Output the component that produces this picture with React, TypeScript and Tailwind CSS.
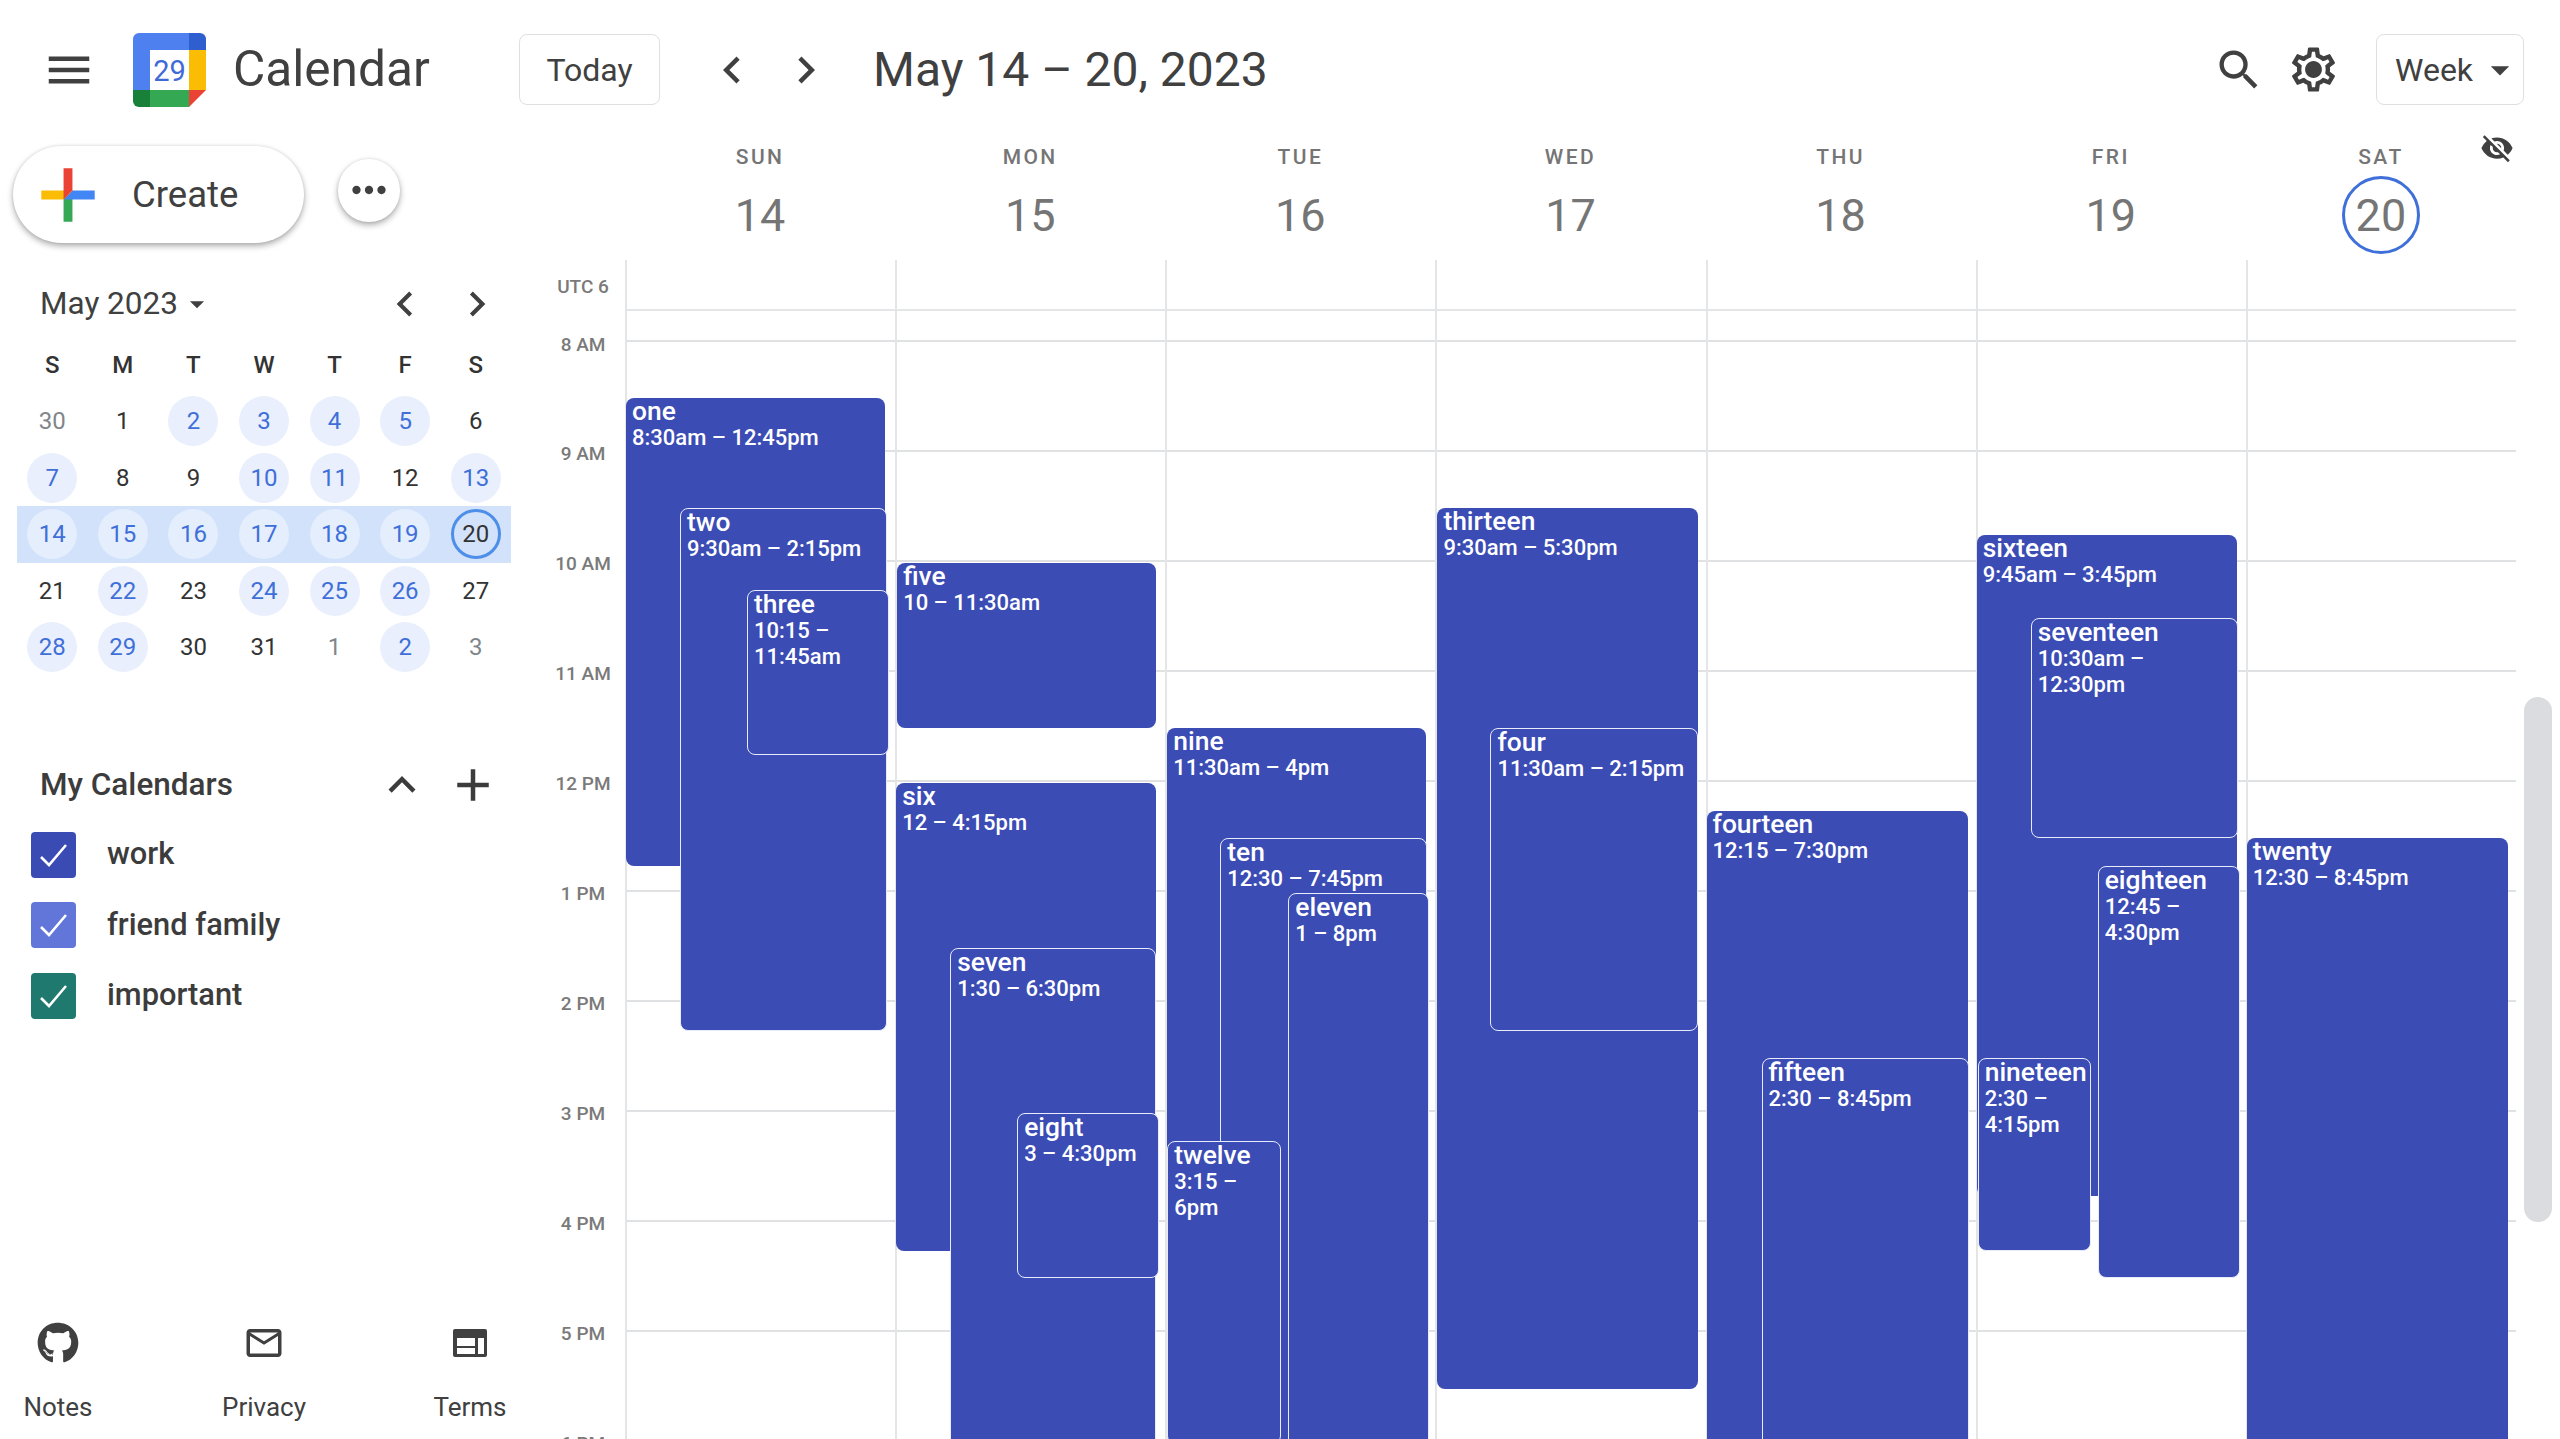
import { FaGithub } from "react-icons/fa";
import { MdAdd, MdArrowDropDown, MdChevronLeft, MdChevronRight, MdKeyboardArrowUp, MdMailOutline, MdMenu, MdMoreHoriz, MdSearch, MdVisibilityOff } from "react-icons/md";

const HOUR = 110.1;
const FIRST_HOUR = 8;
const GRID_TOP = 342.6 - 260;

type CalEvent = { title: string; time: string; day: number; start: number; end: number; left: number; right: number; outlined?: boolean };

// left/right are px offsets inside the day column
const EVENTS: CalEvent[] = [
  { title: "one", time: "8:30am – 12:45pm", day: 0, start: 8.5, end: 12.75, left: -1, right: 258 },
  { title: "two", time: "9:30am – 2:15pm", day: 0, start: 9.5, end: 14.25, left: 53, right: 260, outlined: true },
  { title: "three", time: "10:15 –\n11:45am", day: 0, start: 10.25, end: 11.75, left: 120, right: 262, outlined: true },
  { title: "five", time: "10 – 11:30am", day: 1, start: 10, end: 11.5, left: 0, right: 259 },
  { title: "six", time: "12 – 4:15pm", day: 1, start: 12, end: 16.25, left: -1, right: 259 },
  { title: "seven", time: "1:30 – 6:30pm", day: 1, start: 13.5, end: 18.5, left: 53, right: 259, outlined: true },
  { title: "eight", time: "3 – 4:30pm", day: 1, start: 15, end: 16.5, left: 120, right: 262, outlined: true },
  { title: "nine", time: "11:30am – 4pm", day: 2, start: 11.5, end: 16, left: 0, right: 259 },
  { title: "ten", time: "12:30 – 7:45pm", day: 2, start: 12.5, end: 19.75, left: 53, right: 260, outlined: true },
  { title: "eleven", time: "1 – 8pm", day: 2, start: 13, end: 20, left: 121, right: 262, outlined: true },
  { title: "twelve", time: "3:15 –\n6pm", day: 2, start: 15.25, end: 18, left: 0, right: 114, outlined: true },
  { title: "thirteen", time: "9:30am – 5:30pm", day: 3, start: 9.5, end: 17.5, left: 0, right: 261 },
  { title: "four", time: "11:30am – 2:15pm", day: 3, start: 11.5, end: 14.25, left: 53, right: 261, outlined: true },
  { title: "fourteen", time: "12:15 – 7:30pm", day: 4, start: 12.25, end: 19.5, left: -1, right: 260 },
  { title: "fifteen", time: "2:30 – 8:45pm", day: 4, start: 14.5, end: 20.75, left: 54, right: 261, outlined: true },
  { title: "sixteen", time: "9:45am – 3:45pm", day: 5, start: 9.75, end: 15.75, left: -1, right: 259 },
  { title: "seventeen", time: "10:30am –\n12:30pm", day: 5, start: 10.5, end: 12.5, left: 53, right: 260, outlined: true },
  { title: "eighteen", time: "12:45 –\n4:30pm", day: 5, start: 12.75, end: 16.5, left: 120, right: 262, outlined: true },
  { title: "nineteen", time: "2:30 –\n4:15pm", day: 5, start: 14.5, end: 16.25, left: 0, right: 113, outlined: true },
  { title: "twenty", time: "12:30 – 8:45pm", day: 6, start: 12.5, end: 20.75, left: -1, right: 260 },
];

const HOURS = ["8 AM", "9 AM", "10 AM", "11 AM", "12 PM", "1 PM", "2 PM", "3 PM", "4 PM", "5 PM", "6 PM"];
const WEEK = [
  ["SUN", "14"],
  ["MON", "15"],
  ["TUE", "16"],
  ["WED", "17"],
  ["THU", "18"],
  ["FRI", "19"],
  ["SAT", "20"],
];

type Tone = "plain" | "muted" | "busy" | "today";
const MONTH: [string, Tone][][] = [
  [["30", "muted"], ["1", "plain"], ["2", "busy"], ["3", "busy"], ["4", "busy"], ["5", "busy"], ["6", "plain"]],
  [["7", "busy"], ["8", "plain"], ["9", "plain"], ["10", "busy"], ["11", "busy"], ["12", "plain"], ["13", "busy"]],
  [["14", "busy"], ["15", "busy"], ["16", "busy"], ["17", "busy"], ["18", "busy"], ["19", "busy"], ["20", "today"]],
  [["21", "plain"], ["22", "busy"], ["23", "plain"], ["24", "busy"], ["25", "busy"], ["26", "busy"], ["27", "plain"]],
  [["28", "busy"], ["29", "busy"], ["30", "plain"], ["31", "plain"], ["1", "muted"], ["2", "busy"], ["3", "muted"]],
];

const CALENDARS = [
  { name: "work", color: "bg-[#3a4cb4]" },
  { name: "friend family", color: "bg-[#6176d8]" },
  { name: "important", color: "bg-[#20796e]" },
];

function CalendarLogo() {
  return (
    <svg width="73" height="74" viewBox="0 0 73 74" className="shrink-0">
      <rect x="17" y="17" width="39" height="40" fill="#fff" />
      <path d="M6 0h38v17H17v40H0V6a6 6 0 0 1 6-6z" fill="#4f80f0" />
      <path d="M56 0h11a6 6 0 0 1 6 6v11H56z" fill="#2f5fcf" />
      <rect x="56" y="17" width="17" height="40" fill="#fbbc04" />
      <path d="M17 57h39v17H17z" fill="#34a853" />
      <path d="M0 57h17v17H6a6 6 0 0 1-6-6z" fill="#188038" />
      <path d="M56 57h17L56 74z" fill="#ea4335" />
      <path d="M44 0h12v17H44z" fill="#4f80f0" />
      <text x="36.5" y="48" textAnchor="middle" fontSize="29" fill="#3f6ad8" fontFamily="Roboto, sans-serif">
        29
      </text>
    </svg>
  );
}

function GooglePlus() {
  return (
    <svg width="80" height="80" viewBox="0 0 36 36" className="shrink-0">
      <path fill="#34A853" d="M16 16v14h4V20z" />
      <path fill="#4285F4" d="M30 16H20l-4 4h14z" />
      <path fill="#FBBC05" d="M6 16v4h10l4-4z" />
      <path fill="#EA4335" d="M20 16V6h-4v14z" />
    </svg>
  );
}

function GearIcon() {
  return (
    <svg width="53" height="53" viewBox="0 0 24 24" fill="#404040" className="shrink-0">
      <path d="M19.43 12.98c.04-.32.07-.64.07-.98 0-.34-.03-.66-.07-.98l2.11-1.65c.19-.15.24-.42.12-.64l-2-3.46c-.09-.16-.26-.25-.44-.25-.06 0-.12.01-.17.03l-2.49 1c-.52-.4-1.08-.73-1.69-.98l-.38-2.65C14.46 2.18 14.25 2 14 2h-4c-.25 0-.46.18-.49.42l-.38 2.65c-.61.25-1.17.59-1.69.98l-2.49-1c-.06-.02-.12-.03-.18-.03-.17 0-.34.09-.43.25l-2 3.46c-.13.22-.07.49.12.64l2.11 1.65c-.04.32-.07.65-.07.98 0 .33.03.66.07.98l-2.11 1.65c-.19.15-.24.42-.12.64l2 3.46c.09.16.26.25.44.25.06 0 .12-.01.17-.03l2.49-1c.52.4 1.08.73 1.69.98l.38 2.65c.03.24.24.42.49.42h4c.25 0 .46-.18.49-.42l.38-2.65c.61-.25 1.17-.59 1.69-.98l2.49 1c.06.02.12.03.18.03.17 0 .34-.09.43-.25l2-3.46c.12-.22.07-.49-.12-.64l-2.11-1.65zm-1.98-1.71c.04.31.05.52.05.73 0 .21-.02.43-.05.73l-.14 1.13.89.7 1.08.84-.7 1.21-1.27-.51-1.04-.42-.9.68c-.43.32-.84.56-1.25.73l-1.06.43-.16 1.13-.2 1.35h-1.4l-.19-1.35-.16-1.13-1.06-.43c-.43-.18-.83-.41-1.23-.71l-.91-.7-1.06.43-1.27.51-.7-1.21 1.08-.84.89-.7-.14-1.13c-.03-.31-.05-.54-.05-.74s.02-.43.05-.73l.14-1.13-.89-.7-1.08-.84.7-1.21 1.27.51 1.04.42.9-.68c.43-.32.84-.56 1.25-.73l1.06-.43.16-1.13.2-1.35h1.39l.19 1.35.16 1.13 1.06.43c.43.18.83.41 1.23.71l.91.7 1.06-.43 1.27-.51.7 1.21-1.07.85-.89.7.14 1.13zM12 8.2c-2.1 0-3.8 1.7-3.8 3.8s1.7 3.8 3.8 3.8 3.8-1.7 3.8-3.8-1.7-3.8-3.8-3.8z" />
    </svg>
  );
}

function TermsIcon() {
  return (
    <svg width="34" height="28" viewBox="0 0 34 28" fill="#404040">
      <path
        fillRule="evenodd"
        d="M2 0h30a2 2 0 0 1 2 2v24a2 2 0 0 1-2 2H2a2 2 0 0 1-2-2V2a2 2 0 0 1 2-2zM4 9v8h18V9zm0 10v6h18v-6zM25 9v16h6V9z"
      />
    </svg>
  );
}

function Check() {
  return (
    <svg width="30" height="26" viewBox="0 0 30 26" fill="none" stroke="#fff" strokeWidth="2.6">
      <path d="M2 15l8 8L27 3" />
    </svg>
  );
}

function Header() {
  return (
    <header className="flex h-[139px] shrink-0 items-center text-[#404040]">
      <MdMenu size={54} className="ml-[42px] shrink-0" />
      <div className="ml-[37px]">
        <CalendarLogo />
      </div>
      <span className="ml-[27px] w-[196px] whitespace-nowrap text-[49.6px] leading-none">Calendar</span>
      <button type="button" className="ml-[90px] h-[71px] w-[141px] rounded-[8px] border border-[#dedfe1] text-[32px]">
        Today
      </button>
      <MdChevronLeft size={54} className="ml-[45px] shrink-0" />
      <MdChevronRight size={54} className="ml-[20px] shrink-0" />
      <span className="ml-[40px] text-[48px] leading-none">May 14 – 20, 2023</span>
      <div className="ml-auto flex items-center">
        <MdSearch size={52} className="shrink-0" />
        <div className="ml-[22px]">
          <GearIcon />
        </div>
        <button type="button" className="ml-[36px] mr-[36px] flex h-[71px] w-[148px] items-center rounded-[8px] border border-[#dedfe1] pl-[18px] text-[32px]">
          Week
          <MdArrowDropDown size={44} className="ml-[5px] shrink-0" />
        </button>
      </div>
    </header>
  );
}

function MiniCalendar() {
  return (
    <section className="ml-[17px] mt-[36px] w-[494px] text-[#333]">
      <div className="flex h-[50px] items-center pl-[23px] pr-[9px] text-[#404040]">
        <span className="text-[31.5px] leading-none">May 2023</span>
        <MdArrowDropDown size={34} className="ml-[2px] shrink-0" />
        <MdChevronLeft size={50} className="ml-auto shrink-0" />
        <MdChevronRight size={50} className="ml-[22px] shrink-0" />
      </div>
      <div className="mt-[11px] grid h-[50px] grid-cols-7 items-center text-center text-[24px] font-medium leading-none">
        {["S", "M", "T", "W", "T", "F", "S"].map((d, i) => (
          <span key={i}>{d}</span>
        ))}
      </div>
      <div className="mt-[3px]">
        {MONTH.map((week, r) => (
          <div key={r} className={"grid h-[56.5px] grid-cols-7 items-center " + (r === 2 ? "bg-[#d2e2fb]" : "")}>
            {week.map(([label, tone], c) => (
              <div key={c} className="flex justify-center">
                <span
                  className={
                    "flex h-[50px] w-[50px] items-center justify-center rounded-full text-[24px] leading-none " +
                    (tone === "busy"
                      ? (r === 2 ? "bg-[#e4eefd] " : "bg-[#e9effc] ") + "text-[#3f6fd8]"
                      : tone === "muted"
                        ? "text-[#80868b]"
                        : tone === "today"
                          ? "border-[3px] border-[#4c8ee8] text-[#333]"
                          : "text-[#333]")
                  }
                >
                  {label}
                </span>
              </div>
            ))}
          </div>
        ))}
      </div>
    </section>
  );
}

function MyCalendars() {
  return (
    <section className="mt-[84px] pl-[31px] text-[#3c3c3c]">
      <div className="flex h-[50px] items-center pl-[9px] pr-[35px]">
        <span className="text-[31.5px] font-medium leading-none">My Calendars</span>
        <MdKeyboardArrowUp size={54} className="ml-auto shrink-0" />
        <MdAdd size={54} className="ml-[17px] shrink-0" />
      </div>
      <div className="mt-[22px] flex flex-col gap-[24.5px]">
        {CALENDARS.map((c) => (
          <div key={c.name} className="flex h-[46px] items-center">
            <span className={"flex h-[46px] w-[45px] shrink-0 items-center justify-center rounded-[4px] " + c.color}>
              <Check />
            </span>
            <span className="ml-[31px] text-[30.8px] font-medium leading-none">{c.name}</span>
          </div>
        ))}
      </div>
    </section>
  );
}

function Footer() {
  return (
    <footer className="mt-auto flex justify-between pb-[19px] pl-[3px] pr-[10px] text-[#404040]">
      <div className="flex w-[110px] flex-col items-center">
        <div className="flex h-[42px] items-center">
          <FaGithub size={42} />
        </div>
        <span className="mt-[30px] text-[26px] leading-none">Notes</span>
      </div>
      <div className="flex w-[110px] flex-col items-center">
        <div className="flex h-[42px] items-center">
          <MdMailOutline size={42} />
        </div>
        <span className="mt-[30px] text-[26px] leading-none">Privacy</span>
      </div>
      <div className="flex w-[110px] flex-col items-center">
        <div className="flex h-[42px] items-center">
          <TermsIcon />
        </div>
        <span className="mt-[30px] text-[26px] leading-none">Terms</span>
      </div>
    </footer>
  );
}

function Sidebar() {
  return (
    <aside className="flex w-[535px] shrink-0 flex-col">
      <div className="mt-[7px] flex items-center">
        <button
          type="button"
          className="ml-[13px] flex h-[97px] w-[291px] items-center rounded-full bg-white pl-[15px] text-[36.5px] text-[#404040] shadow-[0_3px_6px_rgba(0,0,0,0.32),0_0_3px_rgba(0,0,0,0.1)]"
        >
          <GooglePlus />
          <span className="ml-[24px] pt-[2px] leading-none">Create</span>
        </button>
        <button
          type="button"
          className="ml-[34px] -mt-[9px] flex h-[63px] w-[62px] items-center justify-center rounded-full bg-white text-[#404040] shadow-[0_3px_6px_rgba(0,0,0,0.32),0_0_3px_rgba(0,0,0,0.1)]"
        >
          <MdMoreHoriz size={50} />
        </button>
      </div>
      <MiniCalendar />
      <MyCalendars />
      <Footer />
    </aside>
  );
}

function WeekHeader() {
  return (
    <div className="relative flex h-[121px] shrink-0">
      {WEEK.map(([name, num]) => (
        <div key={name} className="flex w-[270.15px] flex-col items-center pt-[7px] text-[#757575]">
          <span className="text-[21px] font-medium leading-[22px] tracking-[2.4px]">{name}</span>
          {num === "20" ? (
            <span className="mt-[8px] flex h-[78px] w-[78px] items-center justify-center rounded-full border-[3px] border-[#3f6fd8] text-[45px] leading-none">
              {num}
            </span>
          ) : (
            <span className="mt-[8px] flex h-[78px] items-center text-[45px] leading-none">{num}</span>
          )}
        </div>
      ))}
      <MdVisibilityOff size={34} className="absolute right-[46px] top-[-8px] text-[#404040]" />
    </div>
  );
}

function EventCard({ e }: { e: CalEvent }) {
  return (
    <div
      className={
        "absolute whitespace-pre-line rounded-[8px] bg-[#3b4cb5] pl-[6px] text-white " +
        (e.outlined ? "border border-[#e8ecfa]" : "")
      }
      style={{
        top: GRID_TOP + (e.start - FIRST_HOUR) * HOUR,
        height: (e.end - e.start) * HOUR,
        left: e.left,
        width: e.right - e.left,
      }}
    >
      <div className="text-[26.4px] font-medium leading-[27px]">{e.title}</div>
      <div className="text-[22px] font-medium leading-[26px]">{e.time}</div>
    </div>
  );
}

function TimeGrid() {
  return (
    <div className="relative w-[1891px] shrink-0 overflow-hidden">
      {/* horizontal rules */}
      <div className="flex flex-col">
        <div className="h-[51px] shrink-0 border-b-2 border-[#e4e5e7]" />
        <div className="h-[30.6px] shrink-0 border-b-2 border-[#e0e1e3]" />
        {HOURS.map((h) => (
          <div key={h} className="h-[110.1px] shrink-0 border-b-2 border-[#e0e1e3]" />
        ))}
      </div>
      {/* day columns */}
      <div className="absolute inset-0 flex">
        {WEEK.map(([name], d) => (
          <div key={name} className="relative w-[270.15px] shrink-0 border-l-2 border-[#e4e5e7]">
            {EVENTS.filter((e) => e.day === d).map((e) => (
              <EventCard key={e.title} e={e} />
            ))}
          </div>
        ))}
      </div>
    </div>
  );
}

function TimeGutter() {
  return (
    <div className="w-[90px] shrink-0 overflow-hidden pl-[6px] text-center text-[19px] font-medium leading-none text-[#7a7a7a]">
      <div className="flex h-[52px] items-center justify-center">UTC 6</div>
      {/* each label is centred on its hour line */}
      <div className="flex h-[86px] items-end justify-center pb-[44px]">8 AM</div>
      {HOURS.slice(1).map((h) => (
        <div key={h} className="flex h-[110.1px] items-center justify-center">
          {h}
        </div>
      ))}
    </div>
  );
}

export default function App() {
  return (
    <div className="relative flex h-screen w-full flex-col overflow-hidden bg-white font-['Roboto',sans-serif]">
      <Header />
      <div className="flex min-h-0 flex-1">
        <Sidebar />
        <main className="flex min-w-0 flex-1 flex-col">
          <div className="pl-[90px]">
            <WeekHeader />
          </div>
          <div className="flex min-h-0 flex-1">
            <TimeGutter />
            <TimeGrid />
          </div>
        </main>
      </div>
      <div className="absolute left-[2524px] top-[697px] h-[525px] w-[28px] rounded-full bg-[#dadce0]" />
    </div>
  );
}
